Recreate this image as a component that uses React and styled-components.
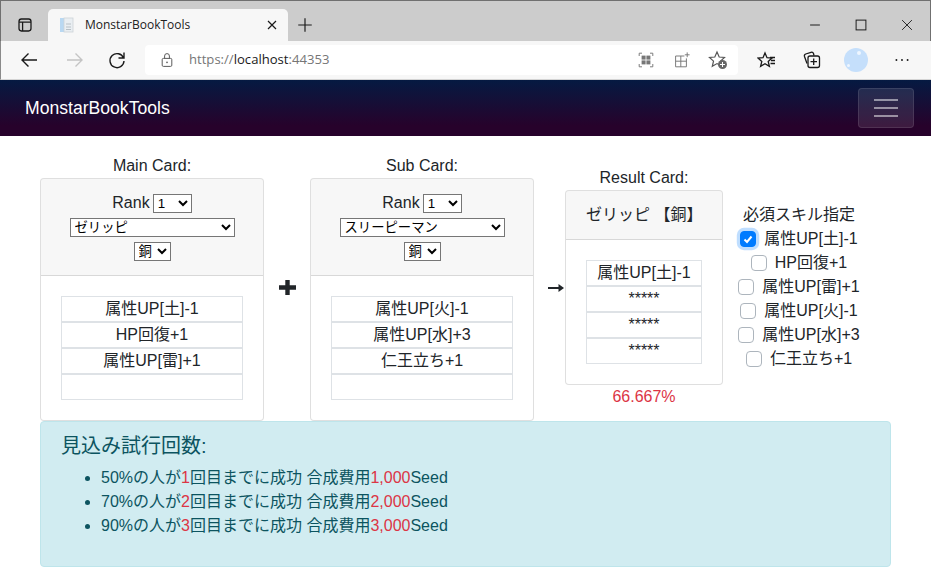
import React from "react";
import styled, { createGlobalStyle } from "styled-components";

const Global = createGlobalStyle`
  html, body { margin: 0; padding: 0; background: #fff; overflow: hidden; }
  body { font-family: "Liberation Sans", "Noto Sans CJK JP", sans-serif; font-size: 16px; line-height: 1.5; color: #212529; }
  * { box-sizing: border-box; }
`;

const Page = styled.div`width: 931px; height: 577px; display: flex; flex-direction: column; overflow: hidden;`;
const TabStrip = styled.div`
  height: 41px; background: #cccccc; border-top: 1px solid #707070; border-left: 1px solid #707070; border-right: 1px solid #707070;
  display: flex; align-items: flex-end; flex-shrink: 0;
`;
const StripIcon = styled.div`
  width: ${p => p.$w}px; height: 32px; display: flex; align-items: center; justify-content: center; flex-shrink: 0;
  margin-left: ${p => p.$ml || 0}px;
`;
const Tab = styled.div`
  width: 240px; height: 32px; background: #f7f7f7; border-radius: 5px 5px 0 0; display: flex; align-items: center; padding: 0 8px 0 11px; flex-shrink: 0;
`;
const TabTitle = styled.span`
  font-family: "Open Sans", sans-serif; font-size: 12px; color: #222; margin-left: 10px; flex: 1; white-space: nowrap;
`;
const Toolbar = styled.div`
  height: 39px; background: #f7f7f7; border-bottom: 1px solid #d4d4d4; border-left: 1px solid #8a8a8a; display: flex; align-items: center; flex-shrink: 0; padding-bottom: 1px;
`;
const ToolIcon = styled.div`
  width: ${p => p.$w || 36}px; height: 30px; display: flex; align-items: center; justify-content: center; flex-shrink: 0; margin-left: ${p => p.$ml || 0}px;
`;
const UrlBar = styled.div`
  width: 593px; height: 30px; background: #fff; border-radius: 4px; display: flex; align-items: center; flex-shrink: 0; margin-left: ${p => p.$ml}px;
`;
const UrlText = styled.span`
  font-family: "Open Sans", sans-serif; font-size: 13.1px; color: #767676; flex: 1; white-space: nowrap;
  b { font-weight: 400; color: #1a1a1a; }
`;
const Avatar = styled.div`
  width: 24px; height: 24px; border-radius: 50%; background: #c5dffb; position: relative;
  &::before { content: ""; position: absolute; left: 13px; top: 3px; width: 4px; height: 4px; border-radius: 50%; background: #eef6ff; }
  &::after { content: ""; position: absolute; left: 3px; top: 16px; width: 3px; height: 3px; border-radius: 50%; background: #eef6ff; }
`;
const Navbar = styled.nav`
  height: 56px; flex-shrink: 0; background: linear-gradient(to bottom, #051a42 0%, #27022b 82%, #27022b 100%);
  display: flex; align-items: center; justify-content: space-between; padding: 0 17px 0 25px;
`;
const Brand = styled.a`color: #fff; font-size: 17.6px; white-space: nowrap;`;
const Toggler = styled.button`
  width: 56px; height: 40px; background: rgba(255,255,255,.1); border: 1px solid rgba(255,255,255,.1); border-radius: 4px;
  display: flex; flex-direction: column; justify-content: center; align-items: center; gap: 6px; padding: 0;
  span { display: block; width: 24px; height: 2px; background: rgba(255,255,255,.5); }
`;
const Content = styled.main`padding: 18px 40px 0; width: 931px;`;
const Row = styled.div`display: flex; align-items: center; height: 267px;`;
const CardCol = styled.div`width: ${p => p.$w}px; text-align: center; flex-shrink: 0;`;
const Sep = styled.div`width: ${p => p.$w}px; flex-shrink: 0; display: flex; justify-content: ${p => p.$end ? "flex-end" : "center"}; align-items: center;`;
const Card = styled.div`border: 1px solid rgba(0,0,0,.125); border-radius: 4px; background: #fff; overflow: hidden;`;
const CardHeader = styled.div`padding: 12px 20px; background: rgba(0,0,0,.03); border-bottom: 1px solid rgba(0,0,0,.125); text-align: center; white-space: nowrap;`;
const Line = styled.div`height: 24px; display: flex; justify-content: center; align-items: center; gap: 3px;`;
const Select = styled.select`width: ${p => p.$w}px; height: 19px; font-family: "Liberation Sans", "Noto Sans CJK JP", sans-serif; font-size: 13.33px; background: #fff; color: #000;`;
const CardBody = styled.div`padding: 20px;`;
const SkillCell = styled.div`border: 1px solid #dee2e6; height: 26px; line-height: 24px; text-align: center; white-space: nowrap;`;
const Percent = styled.div`color: #dc3545; height: 24px;`;
const SkillCol = styled.div`width: 132px; margin: 0 0 2px 10px; flex-shrink: 0; display: flex; flex-direction: column; align-items: center;`;
const SkillTitle = styled.div`height: 24px; white-space: nowrap;`;
const CheckRow = styled.label`height: 24px; display: inline-flex; align-items: center; gap: 8px; white-space: nowrap;`;
const Box = styled.span`
  width: 16px; height: 16px; border-radius: 4px; display: flex; align-items: center; justify-content: center;
  background: ${p => p.$on ? "#007bff" : "#fff"}; border: 1px solid ${p => p.$on ? "#007bff" : "#adb5bd"};
  box-shadow: ${p => p.$on ? "0 0 0 3.2px rgba(0,123,255,.25)" : "none"};
`;
const Alert = styled.section`
  height: 146px; background: #d1ecf1; border: 1px solid #bee5eb; border-radius: 4px; color: #0c5460; padding: 12px 20px;
`;
const AlertTitle = styled.h5`font-size: 20px; line-height: 1.2; margin: 0 0 8px; font-weight: 400;`;
const List = styled.ul`margin: 0; padding-left: 40px;`;
const Red = styled.span`color: #dc3545;`;

const S = { fill: "none", stroke: "#1a1a1a", strokeWidth: 1.2 };
const Ic = ({ s = 20, children }) => <svg width={s} height={s} viewBox="0 0 20 20">{children}</svg>;

const skills = ["属性UP[土]-1", "HP回復+1", "属性UP[雷]+1", "属性UP[火]-1", "属性UP[水]+3", "仁王立ち+1"];
const rates = [["50", 1], ["70", 2], ["90", 3]];

const CardUnit = ({ label, name, rows }) => (
  <CardCol $w={224}>
    <div>{label}</div>
    <Card>
      <CardHeader>
        <Line>Rank <Select $w={39} defaultValue="1"><option>1</option></Select></Line>
        <Line><Select $w={165} defaultValue={name}><option>{name}</option></Select></Line>
        <Line><Select $w={37} defaultValue="銅"><option>銅</option></Select></Line>
      </CardHeader>
      <CardBody>
        {rows.map((r, i) => <SkillCell key={i}>{r}</SkillCell>)}
      </CardBody>
    </Card>
  </CardCol>
);

export default function App() {
  return (
    <Page>
      <Global />
      <TabStrip>
        <StripIcon $w={47}>
          <Ic s={16}>
            <rect x="2.5" y="2.5" width="15" height="15" rx="3" {...S} strokeWidth="1.6" />
            <path d="M2.5 6.500h15M7 6.500v11" {...S} strokeWidth="1.6" />
          </Ic>
        </StripIcon>
        <Tab>
          <svg width="16" height="16" viewBox="0 0 16 16">
            <rect x="1" y="1" width="5" height="14" fill="#b9d8f2" />
            <rect x="5" y="1" width="9" height="14" fill="#e9eef2" stroke="#ccd3d8" strokeWidth="0.8" />
            <path d="M7 7h5M7 10h5M7 12.500h5" stroke="#b8c0c6" fill="none" />
          </svg>
          <TabTitle>MonstarBookTools</TabTitle>
          <Ic s={16}><path d="M5 5l10 10M15 5L5 15" {...S} strokeWidth="1.5" /></Ic>
        </Tab>
        <StripIcon $w={34}>
          <Ic s={18}><path d="M10 2.500v15M2.500 10h15" {...S} strokeWidth="1.3" /></Ic>
        </StripIcon>
        <StripIcon $w={46} $ml={470}><Ic s={14}><path d="M3 10h14" {...S} strokeWidth="1.4" /></Ic></StripIcon>
        <StripIcon $w={46}><Ic s={14}><rect x="3" y="3" width="14" height="14" {...S} strokeWidth="1.4" /></Ic></StripIcon>
        <StripIcon $w={46}><Ic s={14}><path d="M3 3l14 14M17 3L3 17" {...S} strokeWidth="1.3" /></Ic></StripIcon>
      </TabStrip>
      <Toolbar>
        <ToolIcon $w={46} $ml={5}>
          <Ic><path d="M18 10H3M9.500 3.500L3 10l6.500 6.500" {...S} strokeWidth="1.4" /></Ic>
        </ToolIcon>
        <ToolIcon $w={46}>
          <Ic><path d="M2 10h15M10.500 3.500L17 10l-6.500 6.500" {...S} stroke="#c4c4c4" strokeWidth="1.4" /></Ic>
        </ToolIcon>
        <ToolIcon $w={38}>
          <Ic><path d="M16.500 8A7 7 0 1 0 17 11M17 2.500V8h-5.500" {...S} strokeWidth="1.4" /></Ic>
        </ToolIcon>
        <UrlBar $ml={9}>
          <ToolIcon $w={44}>
            <Ic s={16}>
              <rect x="4" y="8" width="12" height="10" rx="1.5" {...S} stroke="#555" />
              <path d="M7 8V5a3 3 0 0 1 6 0v3" {...S} stroke="#555" />
              <circle cx="10" cy="13" r="1" fill="#555" />
            </Ic>
          </ToolIcon>
          <UrlText>https://<b>localhost</b>:44353</UrlText>
          <ToolIcon>
            <Ic s={16}>
              <path d="M1.500 5V1.500H5M15 1.500h3.500V5M18.500 15v3.500H15M5 18.500H1.500V15" {...S} stroke="#777" />
              <rect x="4.500" y="4.500" width="5" height="5" fill="#777" /><rect x="10.500" y="4.500" width="5" height="5" fill="#777" />
              <rect x="4.500" y="10.500" width="5" height="5" fill="#777" /><rect x="10.500" y="10.500" width="5" height="5" fill="#777" />
            </Ic>
          </ToolIcon>
          <ToolIcon>
            <Ic s={16}>
              <path d="M13 5H2v13.500h13.500V8M2 11.500h13.500M8.500 5v13.500M16.500 0.500v6M13.500 3.500h6" {...S} stroke="#777" />
            </Ic>
          </ToolIcon>
          <ToolIcon>
            <Ic>
              <path d="M9 2l2.200 5 5.300.5-4 3.600 1.200 5.200L9 13.600l-4.700 2.700 1.200-5.200-4-3.600 5.300-.5z" {...S} stroke="#555" />
              <circle cx="14.500" cy="14.500" r="4.500" fill="#666" />
              <path d="M14.500 12v5M12 14.500h5" stroke="#fff" fill="none" />
            </Ic>
          </ToolIcon>
          <ToolIcon $w={2} />
        </UrlBar>
        <ToolIcon $w={46} $ml={6}>
          <Ic>
            <path d="M8 3l2 4.700 5 .4-3.800 3.300 1.200 5L8 13.700l-4.400 2.700 1.200-5L1 8.100l5-.4z" {...S} strokeWidth="1.3" />
            <path d="M13 7.500h5M14 10.500h4M13.500 13.500h4.500" {...S} strokeWidth="1.3" />
          </Ic>
        </ToolIcon>
        <ToolIcon $w={43}>
          <Ic>
            <path d="M5 13.500L2.500 6.500a2 2 0 0 1 1.200-2.500L9 2.300a2 2 0 0 1 2.500 1.200l.5 2" {...S} strokeWidth="1.3" />
            <rect x="6" y="6" width="11.500" height="11.500" rx="2" {...S} fill="#f7f7f7" strokeWidth="1.3" />
            <path d="M11.700 8.500v6.500M8.500 11.700H15" {...S} strokeWidth="1.3" />
          </Ic>
        </ToolIcon>
        <ToolIcon $w={46}><Avatar /></ToolIcon>
        <ToolIcon $w={46}>
          <Ic s={16}><circle cx="3" cy="10" r="1.200" fill="#1a1a1a" /><circle cx="10" cy="10" r="1.200" fill="#1a1a1a" /><circle cx="17" cy="10" r="1.200" fill="#1a1a1a" /></Ic>
        </ToolIcon>
      </Toolbar>
      <Navbar>
        <Brand>MonstarBookTools</Brand>
        <Toggler aria-label="menu"><span /><span /><span /></Toggler>
      </Navbar>
      <Content>
        <Row>
          <CardUnit label="Main Card:" name="ゼリッピ" rows={["属性UP[土]-1", "HP回復+1", "属性UP[雷]+1", ""]} />
          <Sep $w={46}>
            <svg width="17" height="15" viewBox="0 0 17 15"><path d="M8.500 0v15M0 7.500h17" stroke="#212529" strokeWidth="4.400" fill="none" /></svg>
          </Sep>
          <CardUnit label="Sub Card:" name="スリーピーマン" rows={["属性UP[火]-1", "属性UP[水]+3", "仁王立ち+1", ""]} />
          <Sep $w={31} $end>
            <svg width="16" height="8" viewBox="0 0 16 8" style={{ marginRight: 1 }}><path d="M0 4h12" stroke="#212529" strokeWidth="2" fill="none" /><path d="M10.500 0L16 4l-5.500 4z" fill="#212529" /></svg>
          </Sep>
          <CardCol $w={158}>
            <div>Result Card:</div>
            <Card>
              <CardHeader>ゼリッピ 【銅】</CardHeader>
              <CardBody>
                <SkillCell>属性UP[土]-1</SkillCell>
                <SkillCell>*****</SkillCell>
                <SkillCell>*****</SkillCell>
                <SkillCell>*****</SkillCell>
              </CardBody>
            </Card>
            <Percent>66.667%</Percent>
          </CardCol>
          <SkillCol>
            <SkillTitle>必須スキル指定</SkillTitle>
            {skills.map((s, i) => (
              <CheckRow key={s}>
                <Box $on={i === 0}>
                  {i === 0 && <svg width="10" height="10" viewBox="0 0 10 10"><path d="M1.500 5.500L4 8l4.500-5.500" stroke="#fff" strokeWidth="2" fill="none" /></svg>}
                </Box>
                {s}
              </CheckRow>
            ))}
          </SkillCol>
        </Row>
        <Alert>
          <AlertTitle>見込み試行回数:</AlertTitle>
          <List>
            {rates.map(([p, n]) => (
              <li key={p}>{p}%の人が<Red>{n}</Red>回目までに成功 合成費用<Red>{n},000</Red>Seed</li>
            ))}
          </List>
        </Alert>
      </Content>
    </Page>
  );
}
